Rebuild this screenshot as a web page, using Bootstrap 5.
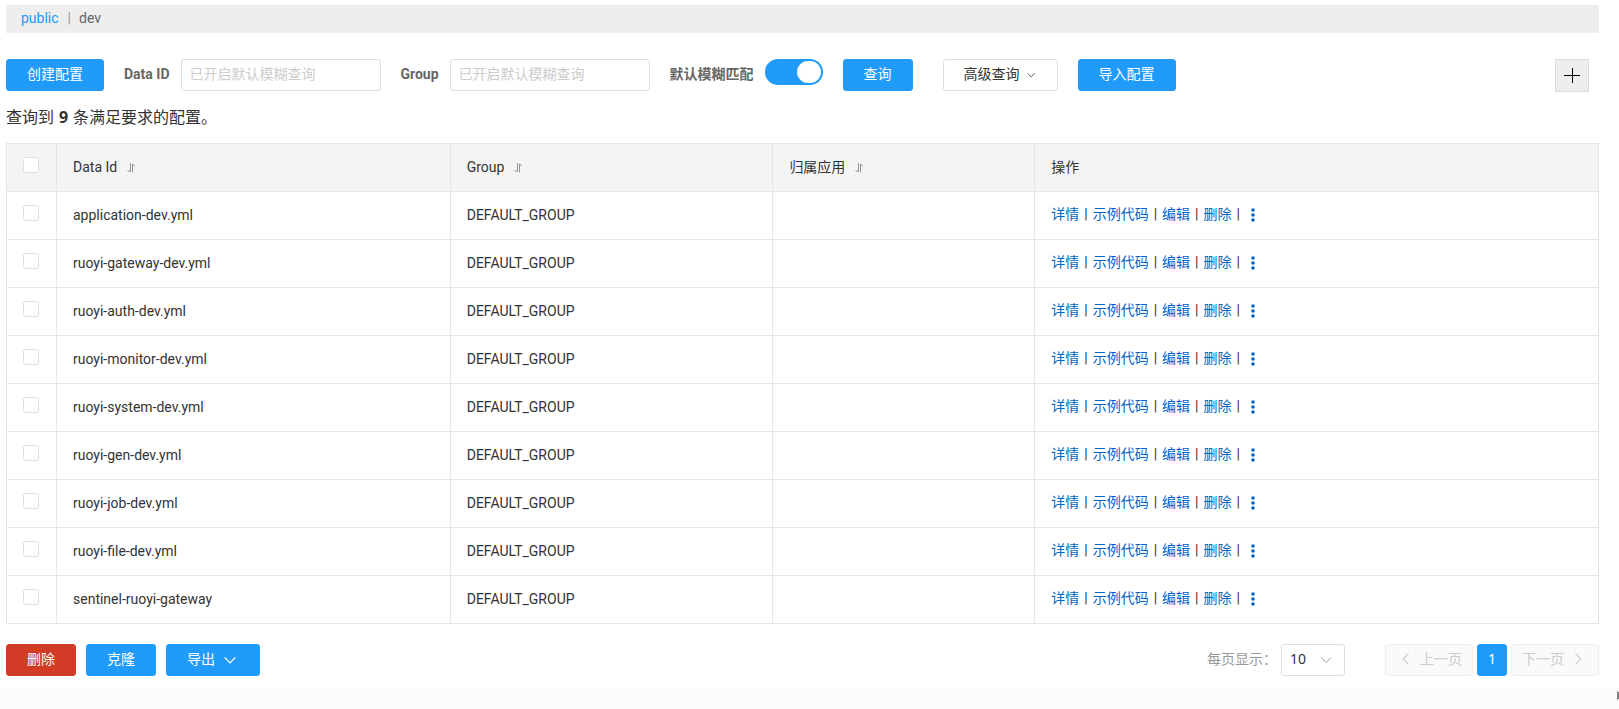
<!DOCTYPE html>
<html lang="zh-CN">
<head>
<meta charset="utf-8">
<meta name="viewport" content="width=device-width, initial-scale=1">
<title>配置管理</title>
<link rel="stylesheet" href="https://cdn.jsdelivr.net/npm/bootstrap@5.3.0/dist/css/bootstrap.min.css">
<style>
  :root { --brand: #209bfa; --line: #e6e6e6; --edge: #dcdee3; --ink: #333; --muted: #666; }
  body { background: #fcfcfc; color: var(--ink); font: 14px/20px Roboto, "Noto Sans CJK SC", sans-serif; }
  a { text-decoration: none; }
  .page { background: #fff; padding: 5px 20px 12px 6px; }
  .ns-bar { background: #eee; height: 28px; padding: 0 15px; color: var(--muted); line-height: 26px; }
  .ns-bar .divider { color: #999; margin: 0 8px 0 9px; }
  .ns-bar a { color: var(--muted); }
  .ns-bar a.current { color: var(--brand); }
  .btn { --bs-btn-font-size: 14px; --bs-btn-line-height: 20px; --bs-btn-border-radius: 3px; height: 32px; padding: 4px 20px 6px; white-space: nowrap; }
  .btn-primary { --bs-btn-bg: var(--brand); --bs-btn-border-color: var(--brand); }
  .btn-danger { --bs-btn-bg: #d23c26; --bs-btn-border-color: #d23c26; }
  .btn-plain { --bs-btn-bg: #fff; --bs-btn-color: #333; --bs-btn-border-color: var(--edge); }
  .toolbar { margin-top: 26px; padding-right: 10px; }
  .toolbar label { color: var(--muted); font-weight: 700; white-space: nowrap; line-height: 30px; margin: 0 11px 0 20px; }
  .toolbar .form-control { width: 200px; height: 32px; font-size: 14px; line-height: 20px; padding: 3px 8px 5px; border-color: var(--edge); border-radius: 3px; }
  .form-control::placeholder { color: #ccc; }
  .toggle { appearance: none; width: 58px; height: 26px; margin: 0; border-radius: 13px; background: var(--brand); padding: 2px; display: flex; justify-content: flex-end; }
  .toggle::before { content: ""; width: 24px; height: 22px; border-radius: 12px; background: #fff; }
  .toggle:not(:checked) { justify-content: flex-start; background: #ccc; }
  .toolbar .query { margin: 0 30px 0 20px; }
  .toolbar .advanced { margin-right: 20px; padding-right: 22px; }
  .btn-add { width: 34px; height: 33px; padding: 0; border: 1px solid #dcdcdc; background: #eee; display: flex; align-items: center; justify-content: center; }
  .summary { font-size: 16px; line-height: 24px; margin: 13px 0; }
  .summary strong { font-family: "Noto Sans", sans-serif; margin: 0 1px; }
  .configs { table-layout: fixed; border: 1px solid var(--line); margin: 0 0 20px; --bs-table-color: #333; --bs-table-bg: transparent; }
  .configs th, .configs td { border: 1px solid var(--line); height: 48px; padding: 0 16px 2px; font-weight: 400; vertical-align: middle; }
  .configs td.ops { padding-bottom: 4px; }
  .configs thead { background: #f4f4f4; }
  .configs .c-check { width: 50px; }
  .configs .c-id { width: 24.73%; }
  .configs .c-group { width: 20.27%; }
  .configs .c-app { width: 16.45%; }
  .configs .form-check-input { display: block; width: 16px; height: 16px; margin: 0 0 4px; border: 1px solid var(--edge); border-radius: 3px; }
  .sort { border: 0; background: none; padding: 0; margin-left: 6px; line-height: 0; color: #888; }
  .ops a { color: #06c; }
  .ops .sep { margin: 0 5px; }
  .ops a.more { margin-left: 6px; }
  .btn .arrow { margin-left: 7px; }
  .batch { gap: 10px; }
  .batch .export { padding-right: 23px; }
  .batch .arrow { margin-left: 9px; }
  .page-size { color: #999; margin-right: 4px; padding-bottom: 2px; white-space: nowrap; }
  .size-select { width: 64px; height: 32px; padding: 0 8px 2px; font: 14px/20px "Noto Sans", sans-serif; color: #333; border: 1px solid var(--edge); border-radius: 3px; background: #fff url("data:image/svg+xml,%3Csvg xmlns='http://www.w3.org/2000/svg' viewBox='0 0 12 12'%3E%3Cpath d='M1 3.5l5 5 5-5' fill='none' stroke='%23999'/%3E%3C/svg%3E") no-repeat right 12px center / 12px 12px; }
  .pager { gap: 4px; margin: 0 0 0 40px; }
  .btn-page { --bs-btn-disabled-bg: #fafafa; --bs-btn-disabled-color: #ccc; --bs-btn-disabled-border-color: #eee; --bs-btn-disabled-opacity: 1; width: 88px; padding: 0 10px 2px; display: flex; align-items: center; justify-content: flex-end; gap: 10px; }
  .btn-page.next { justify-content: flex-start; }
  .btn-num { width: 30px; padding: 0 0 2px; font-family: "Noto Sans", sans-serif; }
  .pointer-edge { position: absolute; right: 0; top: 691px; }
</style>
</head>
<body>
<svg class="d-none" xmlns="http://www.w3.org/2000/svg">
  <symbol id="i-sort" viewBox="0 0 8 10"><path d="M3.500 0v8.500L.5 7.500M5.500 9.500V1L8 3" fill="none" stroke="currentColor" stroke-width=".9"/></symbol>
  <symbol id="i-down" viewBox="0 0 12 12"><path d="M.7 3.500L6 8.800l5.300-5.300" fill="none" stroke="currentColor" stroke-width="1.200"/></symbol>
  <symbol id="i-dots" viewBox="0 0 4 14"><circle cx="2" cy="2" r="1.800"/><circle cx="2" cy="7" r="1.800"/><circle cx="2" cy="12" r="1.800"/></symbol>
</svg>
<main class="page">
  <nav class="ns-bar" aria-label="命名空间"><a href="#" class="current">public</a><span class="divider">|</span><a href="#">dev</a></nav>

  <form class="toolbar d-flex align-items-start">
    <button type="button" class="btn btn-primary">创建配置</button>
    <label for="dataId">Data ID</label>
    <input id="dataId" class="form-control" type="text" placeholder="已开启默认模糊查询">
    <label for="group">Group</label>
    <input id="group" class="form-control" type="text" placeholder="已开启默认模糊查询">
    <label for="fuzzy">默认模糊匹配</label>
    <input id="fuzzy" class="toggle flex-shrink-0" type="checkbox" role="switch" checked>
    <button type="button" class="btn btn-primary query">查询</button>
    <button type="button" class="btn btn-plain advanced">高级查询<svg class="arrow" width="8" height="8"><use href="#i-down"/></svg></button>
    <button type="button" class="btn btn-primary">导入配置</button>
    <button type="button" class="btn-add ms-auto" aria-label="新建"><svg width="17" height="17" viewBox="0 0 17 17"><path d="M0 8.500h16M8.500 1v15" stroke="#000" fill="none"/></svg></button>
  </form>

  <p class="summary">查询到 <strong>9</strong> 条满足要求的配置。</p>

  <table class="table configs">
    <thead>
      <tr>
        <th class="c-check"><input class="form-check-input" type="checkbox" aria-label="全选"></th>
        <th class="c-id">Data Id <button class="sort" aria-label="排序"><svg width="8" height="10"><use href="#i-sort"/></svg></button></th>
        <th class="c-group">Group <button class="sort" aria-label="排序"><svg width="8" height="10"><use href="#i-sort"/></svg></button></th>
        <th class="c-app">归属应用 <button class="sort" aria-label="排序"><svg width="8" height="10"><use href="#i-sort"/></svg></button></th>
        <th>操作</th>
      </tr>
    </thead>
    <tbody id="rows"></tbody>
  </table>

  <div class="d-flex align-items-center">
    <div class="d-flex batch">
      <button type="button" class="btn btn-danger">删除</button>
      <button type="button" class="btn btn-primary">克隆</button>
      <button type="button" class="btn btn-primary export">导出<svg class="arrow" width="12" height="12"><use href="#i-down"/></svg></button>
    </div>
    <label class="page-size ms-auto" for="pageSize">每页显示：</label>
    <select id="pageSize" class="form-select size-select"><option>10</option><option>20</option><option>50</option></select>
    <nav class="pager d-flex" aria-label="分页">
      <button type="button" class="btn btn-page" disabled><svg width="8" height="12" viewBox="0 0 8 12"><path d="M6.500.7L1.200 6l5.300 5.300" fill="none" stroke="currentColor" stroke-width="1.200"/></svg>上一页</button>
      <button type="button" class="btn btn-primary btn-num" aria-current="page">1</button>
      <button type="button" class="btn btn-page next" disabled>下一页<svg width="8" height="12" viewBox="0 0 8 12"><path d="M1.500.7L6.800 6l-5.300 5.300" fill="none" stroke="currentColor" stroke-width="1.200"/></svg></button>
    </nav>
  </div>
</main>
<svg class="pointer-edge" width="2" height="9" aria-hidden="true"><path d="M0 0h1v1h1v7H1v1H0z" fill="#888"/></svg>
<script src="https://cdn.jsdelivr.net/npm/bootstrap@5.3.0/dist/js/bootstrap.bundle.min.js"></script>
<script>
  const names = ['application-dev.yml', 'ruoyi-gateway-dev.yml', 'ruoyi-auth-dev.yml', 'ruoyi-monitor-dev.yml', 'ruoyi-system-dev.yml', 'ruoyi-gen-dev.yml', 'ruoyi-job-dev.yml', 'ruoyi-file-dev.yml', 'sentinel-ruoyi-gateway'];
  const sep = '<span class="sep">|</span>';
  document.getElementById('rows').innerHTML = names.map(n => `<tr>
    <td><input class="form-check-input" type="checkbox" aria-label="${n}"></td>
    <td>${n}</td><td>DEFAULT_GROUP</td><td></td>
    <td class="ops">${['详情', '示例代码', '编辑', '删除'].map(t => `<a href="#">${t}</a>${sep}`).join('')}<a href="#" class="more" aria-label="更多"><svg width="4" height="14" fill="currentColor"><use href="#i-dots"/></svg></a></td>
  </tr>`).join('');
</script>
</body>
</html>
